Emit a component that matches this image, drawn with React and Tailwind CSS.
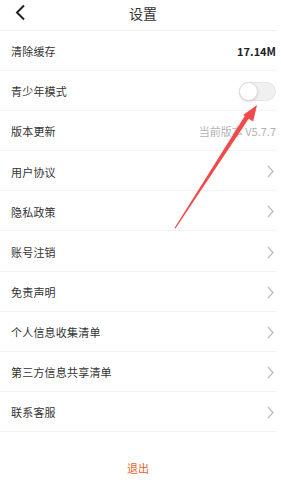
import React from "react";

const rows = [
  { label: "清除缓存", value: "17.14M" },
  { label: "青少年模式", toggle: true },
  { label: "版本更新", version: "当前版本 V5.7.7" },
  { label: "用户协议", arrow: true },
  { label: "隐私政策", arrow: true },
  { label: "账号注销", arrow: true },
  { label: "免责声明", arrow: true },
  { label: "个人信息收集清单", arrow: true },
  { label: "第三方信息共享清单", arrow: true },
  { label: "联系客服", arrow: true },
];

const Chevron = () => (
  <svg width="7" height="13" viewBox="0 0 7 13" className="mr-[2px]">
    <path d="M1 1 L6 6.5 L1 12" fill="none" stroke="#bdbdbd" strokeWidth="1.3" />
  </svg>
);

const Toggle = () => (
  <div className="w-[37px] h-[19px] rounded-full bg-[#f0f0f0] border border-[#e6e6e6] relative">
    <div className="absolute left-[-1px] top-[-1px] w-[19px] h-[19px] rounded-full bg-white border border-[#dcdcdc] shadow-sm" />
  </div>
);

const App = () => {
  return (
    <div
      className="relative w-[281px] h-[482px] bg-white overflow-hidden text-[#333]"
      style={{ fontFamily: '"Noto Sans CJK SC", "Noto Sans", sans-serif' }}
    >
      <div className="w-[276px]">
        <div className="h-[31px] flex items-center justify-center relative border-b border-[#f0f0f0]">
          <svg width="12" height="17" viewBox="0 0 12 17" className="absolute left-[14px] top-[4px]">
            <path d="M10 1.5 L3 8.5 L10 15.5" fill="none" stroke="#222" strokeWidth="2" />
          </svg>
          <span className="text-[14px] leading-none mt-[-4px] ml-[10px]">设置</span>
        </div>

        {rows.map((row) => (
          <div
            key={row.label}
            className="h-[40.1px] flex items-center justify-between pl-[11px] pt-[2px] border-b border-[#f2f2f2]"
          >
            <span className="text-[11px] tracking-[0.2px]">{row.label}</span>
            {row.value && <span className="text-[11px] font-bold text-[#222]">{row.value}</span>}
            {row.toggle && <Toggle />}
            {row.version && (
              <span className="text-[11px] text-[#b3b3b3] whitespace-nowrap">{row.version}</span>
            )}
            {row.arrow && <Chevron />}
          </div>
        ))}

        <div className="pt-[28px] flex justify-center">
          <span className="text-[11px] leading-[16px] text-[#f4602c]">退出</span>
        </div>
      </div>

      <svg width="281" height="482" className="absolute left-0 top-0 pointer-events-none">
        <polygon points="174.5,228 175.5,228.5 250.2,116.5 246.2,113.8" fill="#f24a4a" />
        <polygon points="257,105 253.1,121.6 243.1,115" fill="#f24a4a" />
      </svg>
    </div>
  );
};

export default App;
